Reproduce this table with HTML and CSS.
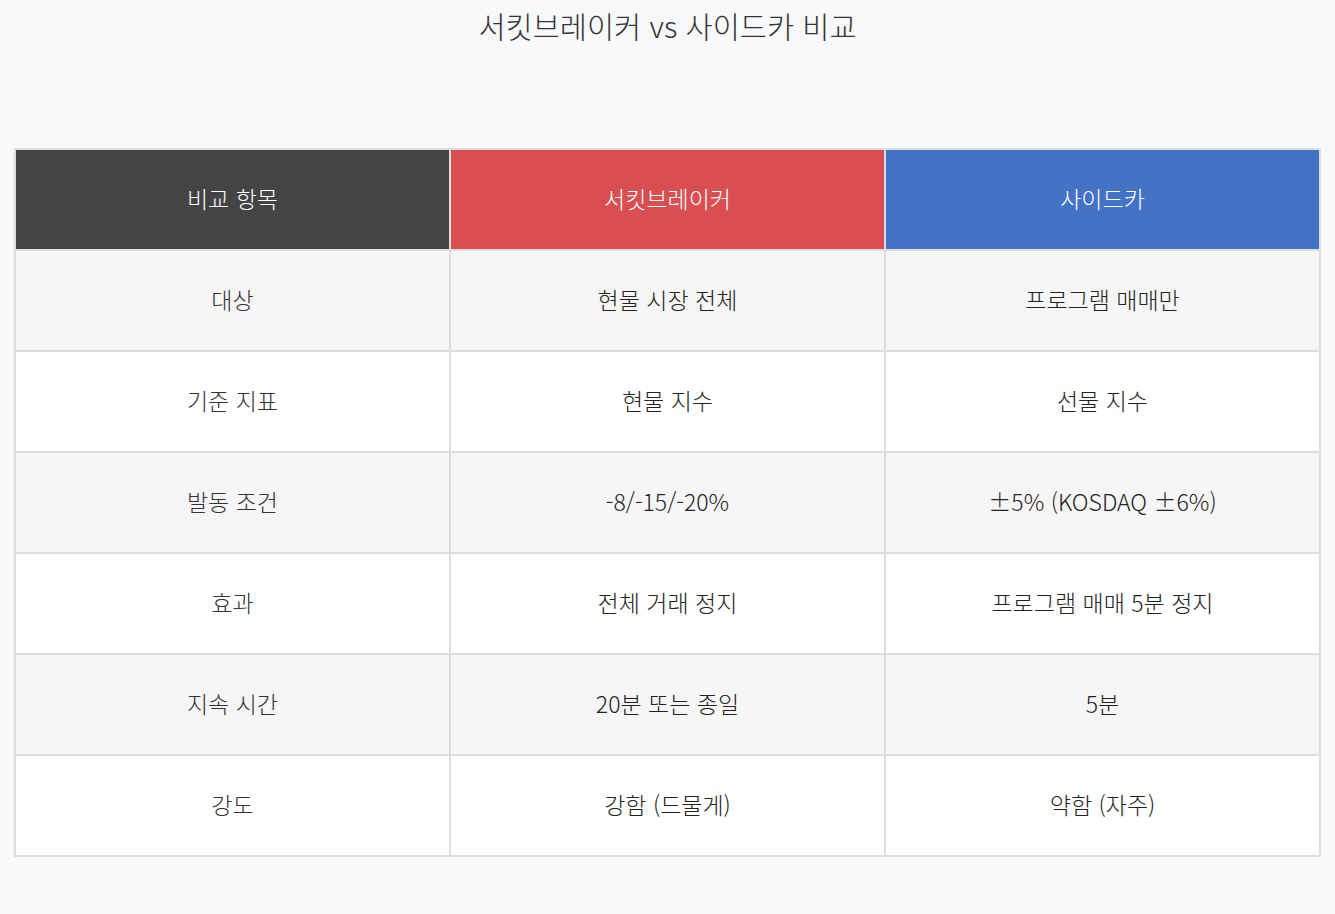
FILE: index.html
```html
<!DOCTYPE html>
<html lang="ko">
<head>
<meta charset="utf-8">
<title>서킷브레이커 vs 사이드카 비교</title>
<link rel="stylesheet" href="styles.css">
</head>
<body>
<div class="page">
  <h1 class="title">서킷브레이커 vs 사이드카 비교</h1>
  <table class="cmp">
    <thead>
      <tr>
        <th class="h-item">비교 항목</th>
        <th class="h-cb">서킷브레이커</th>
        <th class="h-sc">사이드카</th>
      </tr>
    </thead>
    <tbody>
      <tr><td class="lbl">대상</td><td>현물 시장 전체</td><td>프로그램 매매만</td></tr>
      <tr><td class="lbl">기준 지표</td><td>현물 지수</td><td>선물 지수</td></tr>
      <tr><td class="lbl">발동 조건</td><td>-8/-15/-20%</td><td>±5% (KOSDAQ ±6%)</td></tr>
      <tr><td class="lbl">효과</td><td>전체 거래 정지</td><td>프로그램 매매 5분 정지</td></tr>
      <tr><td class="lbl">지속 시간</td><td>20분 또는 종일</td><td>5분</td></tr>
      <tr><td class="lbl">강도</td><td>강함 (드물게)</td><td>약함 (자주)</td></tr>
    </tbody>
  </table>
</div>
</body>
</html>
```

FILE: styles.css
```css
html, body {
  margin: 0;
  padding: 0;
  background: #f8f9fa;
}
body {
  font-family: "Noto Sans CJK KR", "Noto Sans", sans-serif;
  font-weight: 300;
  color: #222;
}
.page {
  padding: 5px 14px 0 14px;
}
.title {
  margin: 0 0 103px 0;
  font-size: 29.5px;
  font-weight: 300;
  line-height: 40px;
  text-align: center;
  color: #333;
}
.cmp {
  width: 1307px;
  border-collapse: collapse;
  table-layout: fixed;
  border: 2px solid #dddddd;
}
.cmp th, .cmp td {
  border: 2px solid #dddddd;
  height: 101px;
  padding: 0 0 3px 0;
  box-sizing: border-box;
  text-align: center;
  vertical-align: middle;
  font-size: 23px;
  font-weight: 300;
}
.cmp th {
  color: #ffffff;
}
.h-item { background: #444444; }
.h-cb { background: #d94f51; }
.h-sc { background: #4472c4; }
.cmp tbody tr:nth-child(odd) td { background: #f6f6f6; }
.cmp tbody tr:nth-child(even) td { background: #ffffff; }
.cmp tbody td.lbl { background: #eeeeee; color: #333; }
```
